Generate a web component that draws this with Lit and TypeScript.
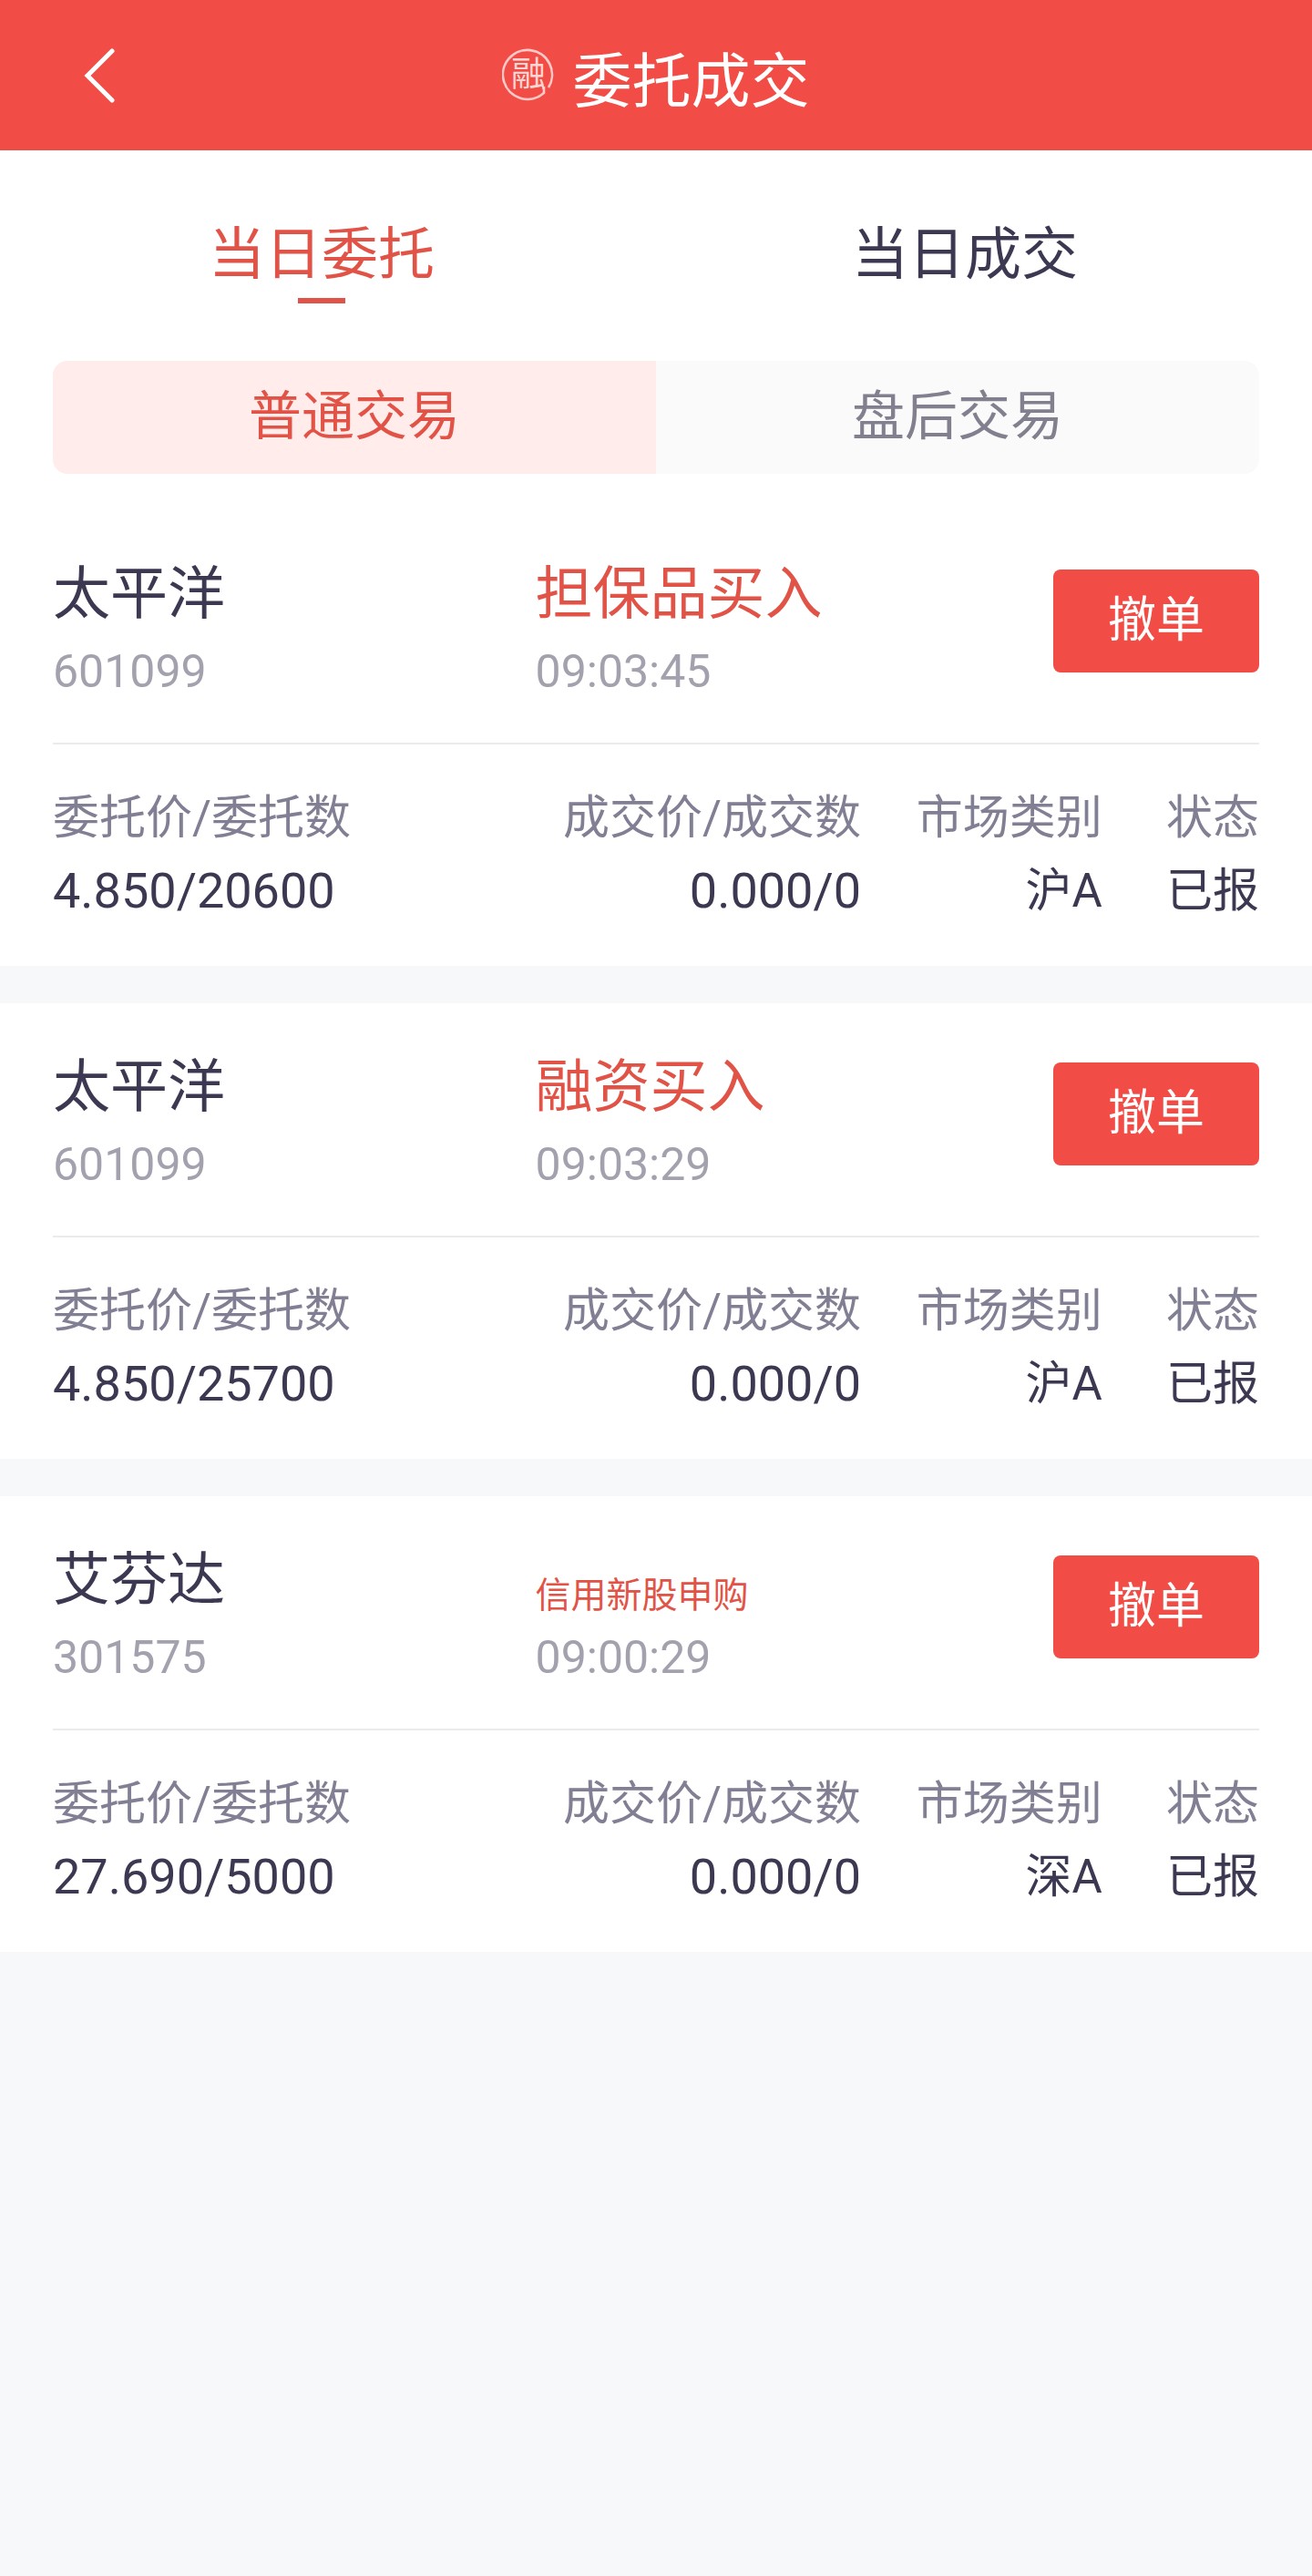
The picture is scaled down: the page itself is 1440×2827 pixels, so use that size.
import { LitElement, html, css, svg } from "lit";
import { customElement, property, state } from "lit/decorators.js";

interface Order {
  name: string;
  code: string;
  kind: string;
  compact?: boolean;
  time: string;
  entrust: string;
  deal: string;
  market: string;
  status: string;
}

const ORDERS: Order[] = [
  { name: "太平洋", code: "601099", kind: "担保品买入", time: "09:03:45", entrust: "4.850/20600", deal: "0.000/0", market: "沪A", status: "已报" },
  { name: "太平洋", code: "601099", kind: "融资买入", time: "09:03:29", entrust: "4.850/25700", deal: "0.000/0", market: "沪A", status: "已报" },
  { name: "艾芬达", code: "301575", kind: "信用新股申购", compact: true, time: "09:00:29", entrust: "27.690/5000", deal: "0.000/0", market: "深A", status: "已报" },
];

const chevron = svg`<path d="M31 3 4 30 31 57" fill="none" stroke="#fff" stroke-width="5" stroke-linecap="round"/>`;

@customElement("order-card")
export class OrderCard extends LitElement {
  @property({ attribute: false }) order!: Order;

  static styles = css`
    :host {
      display: block;
      background: #fff;
      padding: 47px 58px 42px;
    }
    .summary {
      display: grid;
      grid-template-columns: 40% 1fr auto;
      align-items: start;
      padding-bottom: 38px;
      border-bottom: 2px solid #ebebeb;
    }
    .name,
    .kind {
      display: flex;
      align-items: flex-end;
      height: 90px;
      margin: 0;
      font-size: 63px;
      font-weight: 400;
      line-height: 90px;
      color: #3d3852;
    }
    .kind {
      color: #e25347;
    }
    .kind.compact {
      font-size: 39px;
      line-height: 56px;
    }
    .minor {
      margin: 0;
      font-size: 50px;
      line-height: 80px;
      color: #a3a1ad;
    }
    .cancel {
      margin: 18px 0 0;
      padding: 0 60px;
      border: 0;
      border-radius: 8px;
      background: #f14d46;
      color: #fff;
      font-family: inherit;
      font-size: 53px;
      line-height: 113px;
      cursor: pointer;
    }
    .figures {
      width: 100%;
      margin-top: 41px;
      table-layout: fixed;
      border-collapse: collapse;
    }
    .figures th,
    .figures td {
      padding: 0;
      height: 80px;
      line-height: 80px;
      text-align: right;
      white-space: nowrap;
      font-weight: 400;
      font-size: 51px;
      color: #3d3852;
    }
    .figures th {
      color: #817f93;
    }
    .figures td.amount {
      font-size: 54px;
    }
    .figures .first {
      width: 33%;
      text-align: left;
    }
    .figures .second {
      width: 34%;
    }
    .figures .third {
      width: 20%;
    }
  `;

  render() {
    const o = this.order;
    return html`
      <div class="summary">
        <div>
          <h2 class="name">${o.name}</h2>
          <p class="minor">${o.code}</p>
        </div>
        <div>
          <p class="kind ${o.compact ? "compact" : ""}">${o.kind}</p>
          <p class="minor">${o.time}</p>
        </div>
        <button class="cancel" type="button">撤单</button>
      </div>
      <table class="figures">
        <thead>
          <tr>
            <th class="first" scope="col">委托价/委托数</th>
            <th class="second" scope="col">成交价/成交数</th>
            <th class="third" scope="col">市场类别</th>
            <th scope="col">状态</th>
          </tr>
        </thead>
        <tbody>
          <tr>
            <td class="first amount">${o.entrust}</td>
            <td class="amount">${o.deal}</td>
            <td>${o.market}</td>
            <td>${o.status}</td>
          </tr>
        </tbody>
      </table>
    `;
  }
}

@customElement("app-root")
export class AppRoot extends LitElement {
  @state() private tab = 0;
  @state() private session = 0;

  static styles = css`
    :host {
      display: block;
      min-height: 100vh;
      background: #f7f8fa;
      font-family: Roboto, "Noto Sans CJK SC", sans-serif;
    }
    button {
      margin: 0;
      padding: 0;
      border: 0;
      background: none;
      font-family: inherit;
      cursor: pointer;
    }
    .bar {
      display: grid;
      grid-template-columns: 1fr auto 1fr;
      align-items: center;
      height: 165px;
      background: #f14d46;
      color: #fff;
    }
    .back {
      justify-self: start;
      display: flex;
      padding: 30px 92px;
    }
    .heading {
      display: flex;
      align-items: center;
      gap: 19px;
    }
    .title {
      margin: 0;
      padding-top: 14px;
      font-size: 65px;
      font-weight: 400;
      line-height: 80px;
    }
    .emblem {
      display: block;
    }
    .emblem-char {
      font-family: "Noto Sans CJK SC", sans-serif;
      font-size: 38px;
      font-weight: 400;
      fill: #ffd6d3;
    }
    .top {
      padding-bottom: 40px;
      background: #fff;
    }
    .tabs {
      display: flex;
      padding: 68px 28px 63px 0;
    }
    .tab {
      flex: 1;
      display: flex;
      flex-direction: column;
      align-items: center;
      font-size: 62px;
      line-height: 94px;
      color: #3d3852;
    }
    .tab::after {
      content: "";
      width: 52px;
      height: 6px;
    }
    .tab.on {
      color: #e25347;
    }
    .tab.on::after {
      background: #df5349;
    }
    .segments {
      display: flex;
      margin: 0 58px;
      border-radius: 16px;
      overflow: hidden;
      background: #fafafa;
    }
    .segment {
      flex: 1;
      padding-bottom: 2px;
      font-size: 58px;
      line-height: 122px;
      color: #82808e;
    }
    .segment.on {
      background: #ffeceb;
      color: #e25347;
    }
    .orders {
      display: flex;
      flex-direction: column;
      gap: 41px;
    }
  `;

  render() {
    return html`
      <header class="bar">
        <button class="back" type="button" aria-label="返回">
          <svg width="36" height="60" viewBox="0 0 36 60">${chevron}</svg>
        </button>
        <div class="heading">
          <svg class="emblem" width="58" height="74" viewBox="0 -7 58 74" aria-hidden="true">
            <path d="M51 43A27 27 0 1 0 46 49V42" fill="none" stroke="#ffc9c6" stroke-width="2.6" />
            <text class="emblem-char" x="29" y="41" text-anchor="middle">融</text>
          </svg>
          <h1 class="title">委托成交</h1>
        </div>
      </header>
      <div class="top">
        <nav class="tabs">
          ${["当日委托", "当日成交"].map(
            (label, i) => html`<button type="button" class="tab ${this.tab === i ? "on" : ""}" @click=${() => (this.tab = i)}>${label}</button>`
          )}
        </nav>
        <div class="segments">
          ${["普通交易", "盘后交易"].map(
            (label, i) => html`<button type="button" class="segment ${this.session === i ? "on" : ""}" @click=${() => (this.session = i)}>${label}</button>`
          )}
        </div>
      </div>
      <main class="orders">
        ${ORDERS.map((o) => html`<order-card .order=${o}></order-card>`)}
      </main>
    `;
  }
}
